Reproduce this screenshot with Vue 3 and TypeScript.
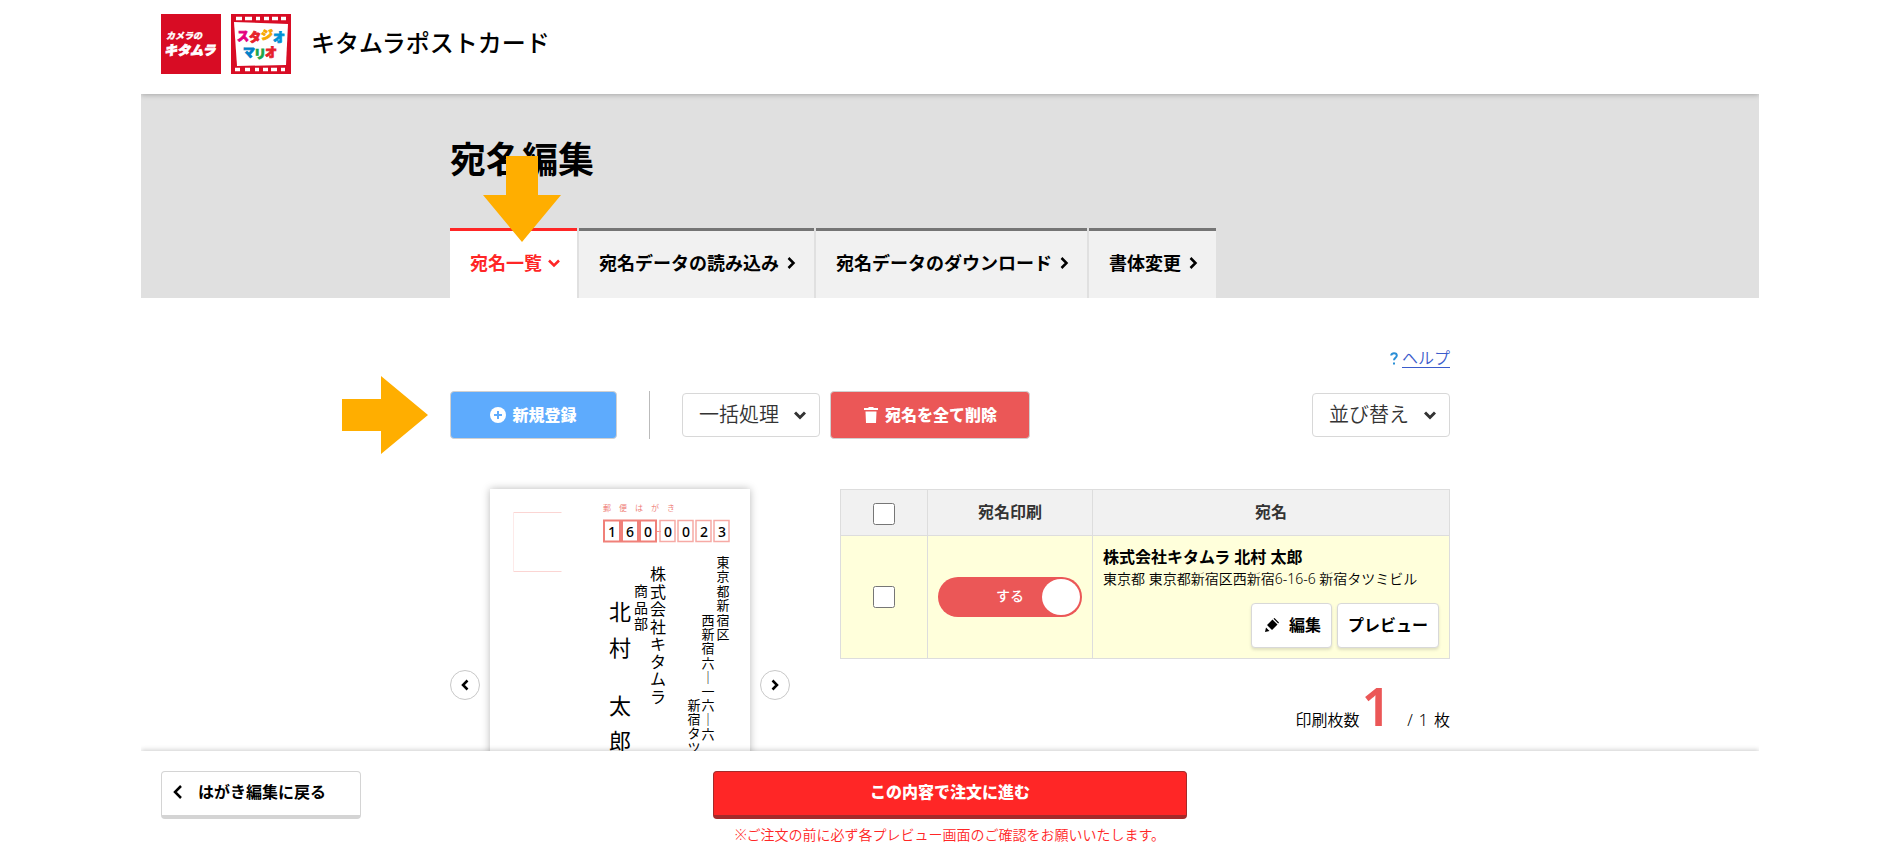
<script setup lang="ts">
import { ref } from 'vue'

interface Tab { label: string; active: boolean }
interface Column { text: string; x: number; y: number; size: number; step: number }

const tabs: Tab[] = [
  { label: '宛名一覧', active: true },
  { label: '宛名データの読み込み', active: false },
  { label: '宛名データのダウンロード', active: false },
  { label: '書体変更', active: false },
]

const zipDigits = ['1', '6', '0', '0', '0', '2', '3']
const zipX = (i: number): number => (i < 3 ? 114 + i * 18 : 170 + (i - 3) * 18)

// x and y are the centre of the first character, step the distance to the next one below
const columns: Column[] = [
  { text: '東京都新宿区', x: 233, y: 73, size: 13, step: 14.4 },
  { text: '西新宿六｜一六｜六', x: 218, y: 131, size: 13, step: 14.2 },
  { text: '新宿タツミビル', x: 204, y: 216, size: 13, step: 14 },
  { text: '株式会社キタムラ', x: 168, y: 85, size: 16, step: 17.5 },
  { text: '商品部', x: 151, y: 102, size: 14, step: 16.5 },
  { text: '北村', x: 130, y: 123, size: 22, step: 36 },
  { text: '太郎', x: 130, y: 217, size: 22, step: 35 },
]
const glyphY = (c: Column): string =>
  [...c.text].map((_, i) => Math.round(c.y + c.size * 0.38 + i * c.step)).join(' ')

const bulk = ref('')
const sort = ref('')
const printOn = ref(true)
const allChecked = ref(false)
const rowChecked = ref(false)
</script>

<template>
  <div class="page">
    <header class="site-header">
      <svg class="logo" viewBox="0 0 60 60" role="img" aria-label="カメラのキタムラ">
        <rect width="60" height="60" fill="#d80c24" />
        <g fill="#fff" stroke="#fff" font-weight="900" font-style="italic">
          <text x="5" y="25" font-size="9" stroke-width="0.3">カメラの</text>
          <text x="3" y="41" font-size="13" stroke-width="0.8">キタムラ</text>
        </g>
      </svg>
      <svg class="logo" viewBox="0 0 60 60" role="img" aria-label="スタジオマリオ">
        <rect width="60" height="60" fill="#d80c24" />
        <path d="M3 8 L57 10 L55 51 L6 52 Z" fill="#fff" />
        <path d="M5 4.500H11M14 4.500H21M25 4.500H29M33 4.500H38M41 4.500H47M50 4.500H55M4 55.500H9M14 55.500H19M24 55.500H28M32 55.500H37M40 55.500H46M50 55.500H54" stroke="#fff" stroke-width="3.500" />
        <g font-weight="900" font-size="12" stroke-width="0.8">
          <text x="6 18 30 42" y="27 28 26 28"><tspan fill="#e4007f" stroke="#e4007f">ス</tspan><tspan fill="#e6212a" stroke="#e6212a">タ</tspan><tspan fill="#f8a900" stroke="#f8a900">ジ</tspan><tspan fill="#0091d5" stroke="#0091d5">オ</tspan></text>
          <text x="12 23 34" y="43 45 43"><tspan fill="#0080c8" stroke="#0080c8">マ</tspan><tspan fill="#1ba548" stroke="#1ba548">リ</tspan><tspan fill="#e6212a" stroke="#e6212a">オ</tspan></text>
        </g>
      </svg>
      <p class="site-name">キタムラポストカード</p>
    </header>

    <section class="hero">
      <div class="hero-inner">
        <h1>宛名編集</h1>
        <svg class="pointer-down" viewBox="0 0 78 86" aria-hidden="true">
          <path d="M23 0H55V39H78L39 86L0 39H23Z" fill="#ffae00" />
        </svg>
        <nav class="tabs">
          <a v-for="t in tabs" :key="t.label" href="#" class="tab" :class="{ active: t.active }">
            {{ t.label }}
            <svg v-if="t.active" class="chev" viewBox="0 0 12 12" aria-hidden="true"><path d="M1 3.500L6 8.500L11 3.500" /></svg>
            <svg v-else class="chev" viewBox="0 0 12 12" aria-hidden="true"><path d="M3.500 1L8.500 6L3.500 11" /></svg>
          </a>
        </nav>
      </div>
    </section>

    <main class="content">
      <p class="help">
        <svg viewBox="0 0 8 13" aria-hidden="true"><path d="M1.200 3.500C1.200 .5 6.800 .5 6.800 3.600C6.800 5.800 4 5.800 4 8.300" /><path d="M4 10.500V12.500" /></svg>
        <a href="#">ヘルプ</a>
      </p>

      <div class="toolbar">
        <svg class="pointer-right" viewBox="0 0 86 78" aria-hidden="true">
          <path d="M0 23H39V0L86 39L39 78V55H0Z" fill="#ffae00" />
        </svg>
        <button type="button" class="btn add">
          <svg class="icon16" viewBox="0 0 16 16" aria-hidden="true"><circle cx="8" cy="8" r="8" fill="#fff" /><path d="M8 4V12M4 8H12" stroke="#5eabfd" stroke-width="2" /></svg>
          新規登録
        </button>
        <span class="divider"></span>
        <div class="select">
          <select v-model="bulk" aria-label="一括処理"><option value="">一括処理</option></select>
          <svg class="chev" viewBox="0 0 12 12" aria-hidden="true"><path d="M1 3.500L6 8.500L11 3.500" /></svg>
        </div>
        <button type="button" class="btn remove">
          <svg class="icon16" viewBox="0 0 16 16" aria-hidden="true"><path d="M1 1H5.500V0H10.500V1H15V3H1ZM2.500 4.500H13.500L13 16H3Z" fill="#fff" /></svg>
          宛名を全て削除
        </button>
        <div class="select sort">
          <select v-model="sort" aria-label="並び替え"><option value="">並び替え</option></select>
          <svg class="chev" viewBox="0 0 12 12" aria-hidden="true"><path d="M1 3.500L6 8.500L11 3.500" /></svg>
        </div>
      </div>

      <div class="columns">
        <div class="carousel">
          <button type="button" class="round" aria-label="前へ">
            <svg class="chev" viewBox="0 0 12 12" aria-hidden="true"><path d="M8.500 1.500L4 6L8.500 10.500" /></svg>
          </button>
          <svg class="postcard" viewBox="0 0 260 392">
            <path d="M23.500 23.500H71.500M23.500 82.500H71.500" stroke="#fbd5d3" fill="none" />
            <path d="M23.500 23.500V82.500" stroke="#fdeae9" fill="none" />
            <text class="mark" x="113 129 145 161 177" y="22">郵便はがき</text>
            <path d="M167 42.500H171" stroke="#f4928c" />
            <g v-for="(d, i) in zipDigits" :key="i">
              <rect :x="zipX(i)" y="31.500" :width="i < 3 ? 16 : 15" height="21" fill="none" :stroke="i < 3 ? '#f08079' : '#f6aaa5'" :stroke-width="i < 3 ? 2 : 1.5" />
              <text class="zip" :x="zipX(i) + 8" y="48">{{ d }}</text>
            </g>
            <text v-for="c in columns" :key="c.text" class="brush" :x="[...c.text].map(() => c.x).join(' ')" :y="glyphY(c)" :font-size="c.size">{{ c.text }}</text>
          </svg>
          <button type="button" class="round" aria-label="次へ">
            <svg class="chev" viewBox="0 0 12 12" aria-hidden="true"><path d="M3.500 1.500L8 6L3.500 10.500" /></svg>
          </button>
        </div>

        <div class="list">
          <table>
            <colgroup><col class="c-check" /><col class="c-print" /><col /></colgroup>
            <thead>
              <tr>
                <th class="pick"><input v-model="allChecked" type="checkbox" aria-label="全て選択" /></th>
                <th>宛名印刷</th>
                <th>宛名</th>
              </tr>
            </thead>
            <tbody>
              <tr>
                <td class="center"><input v-model="rowChecked" type="checkbox" aria-label="選択" /></td>
                <td class="center">
                  <label class="toggle">
                    <input v-model="printOn" type="checkbox" />
                    <span>する</span>
                    <i></i>
                  </label>
                </td>
                <td class="person">
                  <p class="name">株式会社キタムラ 北村 太郎</p>
                  <p class="address">東京都 東京都新宿区西新宿6-16-6 新宿タツミビル</p>
                  <div class="actions">
                    <button type="button">
                      <svg class="pencil" viewBox="0 0 14 14" aria-hidden="true"><path d="M7.500 1.500L12.500 6.500L7 12L2 7ZM0 14L1 9.500L4.500 13ZM8.500 .8L9.500 0L14 4.500L13.200 5.500Z" /></svg>
                      編集
                    </button>
                    <button type="button">プレビュー</button>
                  </div>
                </td>
              </tr>
            </tbody>
          </table>
          <p class="count">印刷枚数 <strong>1</strong> <span>/</span><span>1</span><span>枚</span></p>
        </div>
      </div>
    </main>

    <footer class="bar">
      <button type="button" class="back">
        <svg class="chev" viewBox="0 0 12 14" aria-hidden="true"><path d="M9 1L3 7L9 13" /></svg>
        はがき編集に戻る
      </button>
      <div class="order">
        <button type="button" class="proceed">この内容で注文に進む</button>
        <p>※ご注文の前に必ず各プレビュー画面のご確認をお願いいたします。</p>
      </div>
    </footer>
  </div>
</template>

<style>
body { background: #fff; }
</style>

<style scoped>
.page {
  display: flex;
  flex-direction: column;
  box-sizing: border-box;
  height: 100vh;
  max-width: 1618px;
  margin: 0 auto;
  overflow: hidden;
  color: #000;
  font: 350 16px/24px "Noto Sans", "Noto Sans CJK JP", sans-serif;
}
.page * { box-sizing: border-box; }
p, h1 { margin: 0; }
button, select { font: inherit; color: inherit; cursor: pointer; }
svg { display: block; flex: none; }
.chev { width: 12px; height: 12px; fill: none; stroke: currentColor; stroke-width: 2.5; }

.site-header {
  position: relative;
  z-index: 1;
  flex: none;
  display: flex;
  align-items: center;
  gap: 10px;
  padding: 14px 20px 20px;
  background: #fff;
  box-shadow: 0 1px 5px rgba(0, 0, 0, .25);
  clip-path: inset(0 0 -10px 0);
}
.logo { width: 60px; height: 60px; }
.site-name { padding: 0 0 2px 10px; font-size: 24px; line-height: 32px; font-weight: 500; }

.hero { flex: none; padding-top: 40px; background: #e0e0e0; }
.hero-inner { position: relative; max-width: 1000px; margin: 0 auto; }
h1 { padding-bottom: 42px; font-size: 36px; line-height: 52px; font-weight: 700; }
.pointer-down { position: absolute; z-index: 1; left: 33px; top: 22px; width: 78px; }
.tabs { display: flex; gap: 2px; }
.tab {
  display: flex;
  align-items: center;
  gap: 6px;
  height: 70px;
  padding: 0 17px 4px 20px;
  border-top: 3px solid #757575;
  background: #f1f1f1;
  color: #000;
  font-size: 18px;
  font-weight: 700;
  text-decoration: none;
  white-space: nowrap;
}
.tab.active { border-color: #ff2626; background: #fff; color: #ff2626; }

.content { flex: 1; min-height: 0; width: 100%; max-width: 1000px; margin: 0 auto; padding-top: 48px; }
.help { display: flex; justify-content: flex-end; align-items: center; gap: 4px; }
.help svg { width: 8px; height: 13px; fill: none; stroke: #2b8fd6; stroke-width: 2; }
.help a { color: #3b5bcb; text-underline-offset: 3px; }
.toolbar { position: relative; display: flex; align-items: center; margin-top: 21px; }
.pointer-right { position: absolute; right: calc(100% + 22px); width: 86px; }
.btn {
  display: flex;
  align-items: center;
  justify-content: center;
  gap: 6px;
  height: 48px;
  padding: 0;
  border: 1px solid #d0d0d0;
  border-radius: 4px;
  color: #fff;
  font-weight: 900;
}
.add { width: 167px; background: #5eabfd; }
.remove { width: 200px; margin-left: 10px; background: #eb5757; }
.icon16 { width: 16px; height: 16px; }
.divider { width: 1px; height: 48px; margin: 0 32px; background: #bbb; }
.select { position: relative; width: 138px; color: #333; }
.select select {
  width: 100%;
  height: 44px;
  padding: 0 30px 0 16px;
  border: 1px solid #d8d8d8;
  border-radius: 4px;
  background: #fff;
  appearance: none;
  font-size: 20px;
}
.select .chev { position: absolute; right: 14px; top: 16px; stroke-width: 3; pointer-events: none; }
.sort { margin-left: auto; }

.columns { display: flex; align-items: flex-start; gap: 50px; padding-top: 50px; }
.carousel { display: flex; align-items: center; gap: 10px; }
.round {
  display: flex;
  align-items: center;
  justify-content: center;
  width: 30px;
  height: 30px;
  padding: 0;
  border: 1px solid #c8c8c8;
  border-radius: 50%;
  background: #fff;
}
.postcard { width: 260px; background: #fff; box-shadow: 0 0 8px rgba(0, 0, 0, .28); }
.mark { fill: #ee7770; font-size: 8px; }
.zip { font-family: "Noto Sans", sans-serif; font-size: 14px; font-weight: 500; text-anchor: middle; }
.brush { text-anchor: middle; font-weight: 400; }

.list { flex: 1; min-width: 0; }
table { width: 100%; border-collapse: collapse; table-layout: fixed; }
.c-check { width: 87px; }
.c-print { width: 165px; }
th, td { border: 1px solid #ddd; }
th { height: 46px; padding: 0 0 2px; background: #f1f1f1; color: #333; font-weight: 700; }
th.pick { padding: 2px 0 0; }
td { padding: 10px; background: #ffffdb; }
.center { text-align: center; }
th input, .center > input { display: block; width: 22px; height: 22px; margin: 0 auto; }
.toggle {
  position: relative;
  display: flex;
  align-items: center;
  justify-content: center;
  height: 40px;
  border-radius: 20px;
  background: #eb5757;
  color: #fff;
  font-size: 14px;
  font-weight: 500;
  cursor: pointer;
}
.toggle input { position: absolute; inset: 0; margin: 0; opacity: 0; }
.toggle span { padding-bottom: 2px; }
.toggle i { position: absolute; right: 2px; top: 2px; width: 38px; height: 36px; border-radius: 50%; background: #fff; }
.name { font-weight: 700; line-height: 22px; }
.address { font-size: 14px; line-height: 22px; white-space: nowrap; }
.actions { display: flex; justify-content: flex-end; gap: 5px; padding-top: 13px; }
.actions button {
  display: flex;
  align-items: center;
  gap: 10px;
  height: 45px;
  padding: 0 10px 2px;
  border: 1px solid #d8d8d8;
  border-radius: 4px;
  background: #fff;
  box-shadow: 0 2px 3px rgba(0, 0, 0, .12);
  font-weight: 700;
  white-space: nowrap;
}
.actions button:first-child { padding-left: 13px; }
.pencil { width: 14px; height: 14px; }
.count { display: flex; align-items: baseline; gap: 6px; justify-content: flex-end; padding-top: 17px; line-height: 60px; }
.count strong { margin-right: 10px; margin-left: -4px; color: #eb5757; font: 600 52px/60px "Noto Sans", sans-serif; }

.bar {
  position: relative;
  z-index: 1;
  flex: none;
  display: grid;
  grid-template-columns: 1fr 474px 1fr;
  align-items: start;
  padding: 20px 20px 3px;
  background: #fff;
  box-shadow: 0 -1px 5px rgba(0, 0, 0, .2);
  clip-path: inset(-10px 0 0 0);
}
.back {
  display: flex;
  align-items: center;
  gap: 14px;
  width: 200px;
  height: 48px;
  padding: 0 10px 4px;
  border: 1px solid #d4d4d4;
  border-bottom-width: 4px;
  border-radius: 4px;
  background: #fff;
  font-weight: 700;
}
.back .chev { height: 14px; }
.proceed {
  width: 100%;
  height: 48px;
  padding: 0 0 4px;
  border: 1px solid #a52a2a;
  border-bottom-width: 4px;
  border-radius: 4px;
  background: #ff2626;
  color: #fff;
  font-weight: 900;
}
.order p { padding-top: 4px; color: #ff2626; font-size: 14px; text-align: center; white-space: nowrap; }
</style>
